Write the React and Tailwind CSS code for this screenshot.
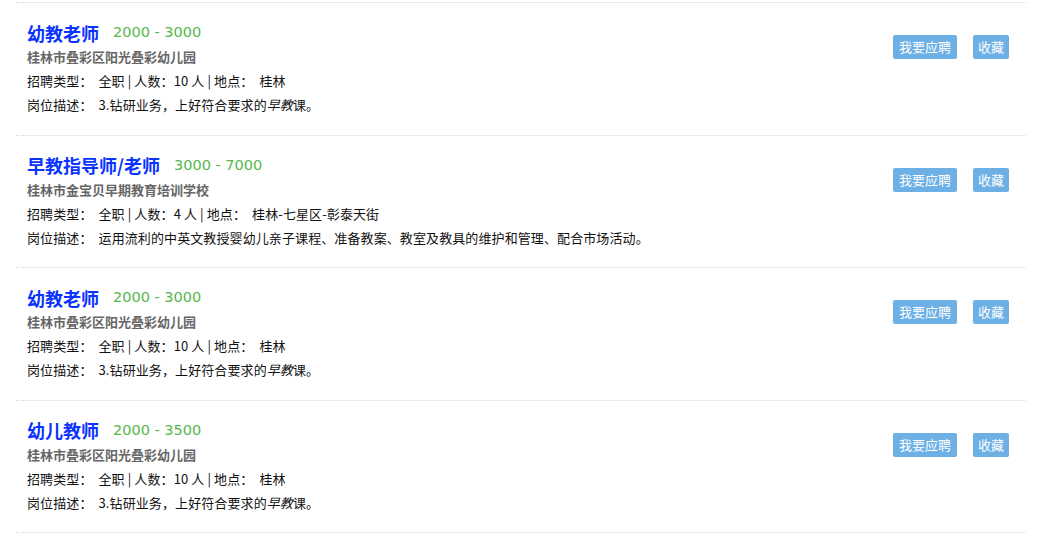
import React from "react";

const jobs = [
  {
    title: "幼教老师",
    salary: "2000 - 3000",
    company: "桂林市叠彩区阳光叠彩幼儿园",
    count: "10",
    place: "桂林",
    desc: "3.钻研业务，上好符合要求的",
    em: "早教",
    tail: "课。",
  },
  {
    title: "早教指导师/老师",
    salary: "3000 - 7000",
    company: "桂林市金宝贝早期教育培训学校",
    count: "4",
    place: "桂林-七星区-彰泰天街",
    desc: "运用流利的中英文教授婴幼儿亲子课程、准备教案、教室及教具的维护和管理、配合市场活动。",
  },
  {
    title: "幼教老师",
    salary: "2000 - 3000",
    company: "桂林市叠彩区阳光叠彩幼儿园",
    count: "10",
    place: "桂林",
    desc: "3.钻研业务，上好符合要求的",
    em: "早教",
    tail: "课。",
  },
  {
    title: "幼儿教师",
    salary: "2000 - 3500",
    company: "桂林市叠彩区阳光叠彩幼儿园",
    count: "10",
    place: "桂林",
    desc: "3.钻研业务，上好符合要求的",
    em: "早教",
    tail: "课。",
  },
];

function JobItem({ job }) {
  return (
    <div className="flex justify-between h-[132.5px] border-b border-dotted border-[#d6d6d6] pl-[11px] pr-[17px]">
      <div className="pt-[18px]">
        {/* title + salary */}
        <div className="flex items-center h-6">
          <span className="text-[18px] font-bold text-[#0a33ff]">{job.title}</span>
          <span className="ml-[14px] text-[14.5px] text-[#55b84a] font-['DejaVu_Sans',sans-serif]">
            {job.salary}
          </span>
        </div>
        <div className="leading-6 text-[13px] font-bold text-[#666]">{job.company}</div>
        <div className="leading-6 text-[13px] text-[#111] tracking-[0.1px]">
          招聘类型：&nbsp;&nbsp;全职 | 人数：{job.count} 人 | 地点：&nbsp;&nbsp;{job.place}
        </div>
        <div className="leading-6 text-[13px] text-[#111] tracking-[0.1px]">
          岗位描述：&nbsp;&nbsp;{job.desc}
          {job.em && <em className="italic">{job.em}</em>}
          {job.tail}
        </div>
      </div>
      <div className="flex gap-4 pt-[32px]">
        <button className="h-6 px-[6px] rounded-[2px] bg-[#6cb0e6] text-white text-[13px] leading-6">
          我要应聘
        </button>
        <button className="h-6 px-[5px] rounded-[2px] bg-[#6cb0e6] text-white text-[13px] leading-6">
          收藏
        </button>
      </div>
    </div>
  );
}

export default function App() {
  return (
    <div className="min-h-screen bg-white pt-[2px] pl-4 font-['Noto_Sans_CJK_SC',sans-serif]">
      <div className="w-[1010px] border-t border-dotted border-[#d6d6d6]">
        {jobs.map((job, i) => (
          <JobItem key={i} job={job} />
        ))}
      </div>
    </div>
  );
}
